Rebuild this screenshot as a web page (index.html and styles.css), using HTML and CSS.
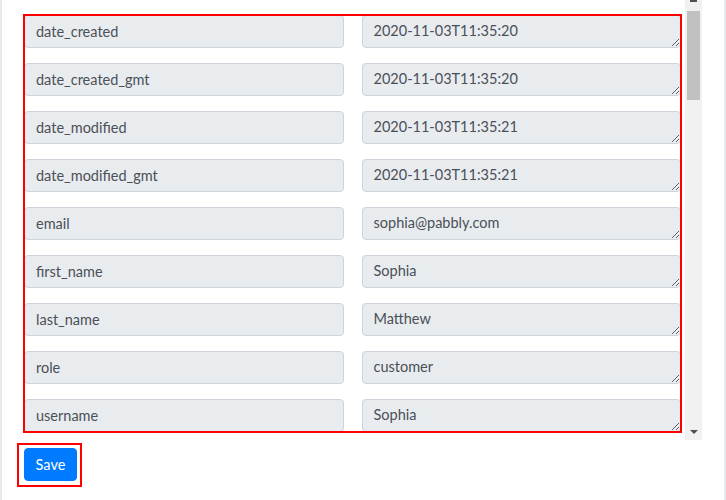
FILE: index.html
```html
<!DOCTYPE html>
<html lang="en">
<head>
  <meta charset="UTF-8" />
  <meta name="viewport" content="width=device-width, initial-scale=1" />
  <title>Field Mapping</title>
  <link rel="stylesheet" href="styles.css">
</head>
<body>

<div class="panel">
  <div class="fields">
    <div class="map">
      <input class="field-key" type="text" value="date_created" readonly>
      <textarea class="field-value">2020-11-03T11:35:20</textarea>

      <input class="field-key" type="text" value="date_created_gmt" readonly>
      <textarea class="field-value">2020-11-03T11:35:20</textarea>

      <input class="field-key" type="text" value="date_modified" readonly>
      <textarea class="field-value">2020-11-03T11:35:21</textarea>

      <input class="field-key" type="text" value="date_modified_gmt" readonly>
      <textarea class="field-value">2020-11-03T11:35:21</textarea>

      <input class="field-key" type="text" value="email" readonly>
      <textarea class="field-value">sophia@pabbly.com</textarea>

      <input class="field-key" type="text" value="first_name" readonly>
      <textarea class="field-value">Sophia</textarea>

      <input class="field-key" type="text" value="last_name" readonly>
      <textarea class="field-value">Matthew</textarea>

      <input class="field-key" type="text" value="role" readonly>
      <textarea class="field-value">customer</textarea>

      <input class="field-key" type="text" value="username" readonly>
      <textarea class="field-value">Sophia</textarea>
    </div>
  </div>

  <div class="scrollbar">
    <div class="sb-up"><span></span></div>
    <div class="sb-thumb"></div>
    <div class="sb-track"></div>
    <div class="sb-down"><span></span></div>
  </div>
</div>

<div class="save-wrap">
  <button class="btn-save">Save</button>
</div>

</body>
</html>
```

FILE: styles.css
```css
:root {
  --text: rgb(73, 80, 87);
  --field-bg: rgb(233, 236, 239);
  --field-border: rgb(206, 212, 218);
  --primary: rgb(0, 123, 255);
  --highlight: rgb(255, 0, 0);
  --edge: rgb(230, 235, 240);
}

html, body {
  height: 100%;
}

body {
  margin: 0;
  font-family: Lato, 'Open Sans', sans-serif;
  font-size: 14.5px;
  color: var(--text);
  background: #fff;
  border-left: 2px solid var(--edge);
  border-right: 2px solid var(--edge);
  box-sizing: border-box;
  display: flex;
  flex-direction: column;
  align-items: flex-start;
}

.panel {
  width: 700px;
  height: 440px;
  display: flex;
}

.fields {
  flex: 1;
  padding: 15px 4px 0 22px;
}

.map {
  display: grid;
  grid-template-columns: 1fr 1fr;
  column-gap: 18px;
  row-gap: 15px;
  outline: 2px solid var(--highlight);
  outline-offset: -1px;
}

.field-key,
.field-value {
  box-sizing: border-box;
  width: 100%;
  height: 33px;
  margin: 0;
  padding: 5px 11px;
  font-family: inherit;
  font-size: 14.5px;
  line-height: 20px;
  color: var(--text);
  background: var(--field-bg);
  border: 1px solid var(--field-border);
  border-radius: 4px;
  outline: none;
}

.field-value {
  resize: vertical;
  overflow: hidden;
  display: block;
}

/* fake scrollbar, the list is scrolled a little */
.scrollbar {
  width: 17px;
  background: rgb(241, 241, 241);
  display: flex;
  flex-direction: column;
}

.sb-up {
  height: 11px;
  display: flex;
  justify-content: center;
}

.sb-up span {
  width: 7px;
  height: 2px;
  background: rgb(80, 80, 80);
}

.sb-thumb {
  height: 89px;
  margin: 0 2px;
  background: rgb(193, 193, 193);
}

.sb-track {
  flex: 1;
}

.sb-down {
  height: 17px;
  display: flex;
  justify-content: center;
  align-items: center;
}

.sb-down span {
  width: 0;
  height: 0;
  border-left: 4px solid transparent;
  border-right: 4px solid transparent;
  border-top: 4px solid rgb(80, 80, 80);
}

.save-wrap {
  margin: 3px 0 0 15px;
  padding: 3px 3px 4px 5px;
  border: 2px solid var(--highlight);
}

.btn-save {
  display: block;
  width: 53px;
  height: 33px;
  padding: 0;
  font-family: inherit;
  font-size: 14.5px;
  color: #fff;
  background: var(--primary);
  border: 1px solid var(--primary);
  border-radius: 4px;
}
```
